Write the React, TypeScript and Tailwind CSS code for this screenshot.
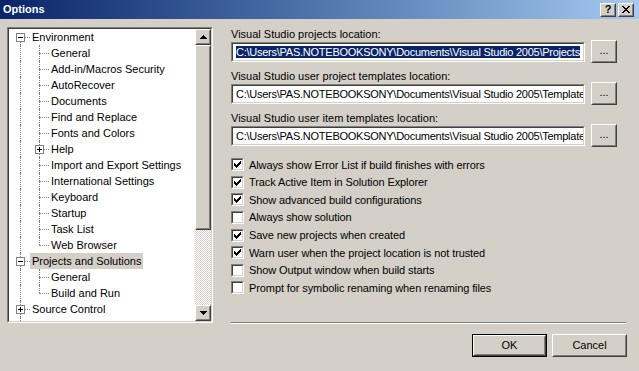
import React from 'react';

type Node = {
  label: string;
  level: 0 | 1;
  expander?: 'plus' | 'minus';
  first?: boolean;
  last?: boolean;
  selected?: boolean;
};

const tree: Node[] = [
  { label: 'Environment', level: 0, expander: 'minus', first: true },
  { label: 'General', level: 1 },
  { label: 'Add-in/Macros Security', level: 1 },
  { label: 'AutoRecover', level: 1 },
  { label: 'Documents', level: 1 },
  { label: 'Find and Replace', level: 1 },
  { label: 'Fonts and Colors', level: 1 },
  { label: 'Help', level: 1, expander: 'plus' },
  { label: 'Import and Export Settings', level: 1 },
  { label: 'International Settings', level: 1 },
  { label: 'Keyboard', level: 1 },
  { label: 'Startup', level: 1 },
  { label: 'Task List', level: 1 },
  { label: 'Web Browser', level: 1, last: true },
  { label: 'Projects and Solutions', level: 0, expander: 'minus', selected: true },
  { label: 'General', level: 1 },
  { label: 'Build and Run', level: 1, last: true },
  { label: 'Source Control', level: 0, expander: 'plus' },
  { label: 'Text Editor', level: 0, expander: 'plus' },
];

const options = [
  { label: 'Always show Error List if build finishes with errors', on: true },
  { label: 'Track Active Item in Solution Explorer', on: true },
  { label: 'Show advanced build configurations', on: true },
  { label: 'Always show solution', on: false },
  { label: 'Save new projects when created', on: true },
  { label: 'Warn user when the project location is not trusted', on: true },
  { label: 'Show Output window when build starts', on: false },
  { label: 'Prompt for symbolic renaming when renaming files', on: false },
];

const path = 'C:\\Users\\PAS.NOTEBOOKSONY\\Documents\\Visual Studio 2005\\';

function Raised({ className = '', children }: { className?: string; children?: React.ReactNode }) {
  return (
    <div className={`border border-t-white border-l-white border-r-[#404040] border-b-[#404040] bg-[#d4d0c8] ${className}`}>
      <div className="flex h-full w-full items-center justify-center border border-t-[#d4d0c8] border-l-[#d4d0c8] border-r-[#808080] border-b-[#808080]">
        {children}
      </div>
    </div>
  );
}

function Sunken({ className = '', children }: { className?: string; children?: React.ReactNode }) {
  return (
    <div className={`border border-t-[#808080] border-l-[#808080] border-r-white border-b-white ${className}`}>
      <div className="h-full w-full border border-t-[#404040] border-l-[#404040] border-r-[#d4d0c8] border-b-[#d4d0c8] bg-white">
        {children}
      </div>
    </div>
  );
}

function Expander({ kind, left }: { kind: 'plus' | 'minus'; left: string }) {
  return (
    <span className={`absolute top-[4px] h-[9px] w-[9px] border border-[#808080] bg-white ${left}`}>
      <span className="absolute left-[1px] top-[3px] h-[1px] w-[5px] bg-black" />
      {kind === 'plus' && <span className="absolute left-[3px] top-[1px] h-[5px] w-[1px] bg-black" />}
    </span>
  );
}

function TreeRow({ node }: { node: Node }) {
  return (
    <div className="flex h-[16px] shrink-0 whitespace-nowrap leading-[16px]">
      <div className="relative h-full w-[21px] shrink-0">
        <span
          className={`absolute left-[11px] bottom-0 border-l border-dotted border-[#808080] ${
            node.level === 0 && node.first ? 'top-[8px]' : 'top-0'
          }`}
        />
        {node.level === 0 && (
          <>
            <span className="absolute left-[11px] top-[8px] w-[10px] border-t border-dotted border-[#808080]" />
            {node.expander && <Expander kind={node.expander} left="left-[7px]" />}
          </>
        )}
      </div>
      {node.level === 1 && (
        <div className="relative h-full w-[19px] shrink-0">
          <span
            className={`absolute left-[9px] top-0 border-l border-dotted border-[#808080] ${
              node.last ? 'h-[8px]' : 'bottom-0'
            }`}
          />
          <span className="absolute left-[9px] top-[8px] w-[10px] border-t border-dotted border-[#808080]" />
          {node.expander && <Expander kind={node.expander} left="left-[5px]" />}
        </div>
      )}
      <span className={`px-[2px] ${node.selected ? 'bg-[#d4d0c8]' : ''}`}>{node.label}</span>
    </div>
  );
}

function Arrow({ up }: { up?: boolean }) {
  return (
    <svg width="7" height="4" viewBox="0 0 7 4" shapeRendering="crispEdges">
      <path d={up ? 'M3 0h1v1h1v1h1v1h1v1H0V3h1V2h1V1h1z' : 'M0 0h7v1H6v1H5v1H4v1H3V3H2V2H1V1H0z'} fill="#000" />
    </svg>
  );
}

function Checkbox({ on }: { on: boolean }) {
  return (
    <Sunken className="h-[13px] w-[13px] shrink-0">
      {on && (
        <svg width="9" height="9" viewBox="0 0 9 9" shapeRendering="crispEdges" className="block">
          <path
            d="M7 1h1v1h-1z M6 2h2v1h-2z M1 3h1v1h-1z M5 3h3v1h-3z M1 4h2v1h-2z M4 4h3v1h-3z M1 5h5v1h-5z M2 6h3v1h-3z M3 7h1v1h-1z"
            fill="#000"
          />
        </svg>
      )}
    </Sunken>
  );
}

function PathField({ label, value, selected }: { label: string; value: string; selected?: boolean }) {
  return (
    <div className="flex flex-col">
      <div className="h-[12px] leading-[12px] whitespace-nowrap">{label}</div>
      <div className="flex h-[23px] items-center">
        <Sunken className="h-[20px] w-[354px] shrink-0">
          <div className="h-full w-full overflow-hidden whitespace-nowrap pl-[3px] leading-[16px] tracking-[-0.25px]">
            <span className={selected ? 'bg-[#0a246a] text-white' : ''}>{value}</span>
          </div>
        </Sunken>
        <Raised className="ml-[6px] h-[23px] w-[26px] shrink-0">
          <span className="pb-[2px] leading-none">...</span>
        </Raised>
      </div>
    </div>
  );
}

export default function App() {
  return (
    <div className="h-[371px] w-[639px] overflow-hidden bg-[#d4d0c8] font-['Liberation_Sans',Arial,sans-serif] text-[11px] text-black">
      {/* caption */}
      <div className="flex h-[19px] items-center bg-gradient-to-r from-[#0a246a] to-[#a6caf0] pl-[3px] pr-[5px]">
        <span className="font-bold text-white">Options</span>
        <div className="ml-auto flex gap-[2px]">
          <Raised className="h-[14px] w-[16px]">
            <span className="text-[11px] font-bold leading-none">?</span>
          </Raised>
          <Raised className="h-[14px] w-[16px]">
            <svg width="8" height="7" viewBox="0 0 8 7" shapeRendering="crispEdges">
              <path
                d="M0 0h2v1h1v1h2V1h1V0h2v1H7v1H6v1H5v1h1v1h1v1h1v1H6V6H5V5H3v1H2v1H0V6h1V5h1V4h1V3H2V2H1V1H0z"
                fill="#000"
              />
            </svg>
          </Raised>
        </div>
      </div>

      <div className="flex pl-[7px] pt-[8px]">
        {/* tree */}
        <Sunken className="h-[296px] w-[206px] shrink-0">
          <div className="flex h-full">
            <div className="flex flex-1 flex-col overflow-hidden">
              {tree.map((n, i) => (
                <TreeRow key={i} node={n} />
              ))}
            </div>
            <div className="flex w-[16px] flex-col">
              <Raised className="h-[16px] w-[16px]">
                <Arrow up />
              </Raised>
              <Raised className="h-[185px] w-[16px]" />
              <div className="flex-1 bg-[repeating-conic-gradient(#d4d0c8_0_25%,#ffffff_0_50%)] bg-[length:2px_2px]" />
              <Raised className="h-[16px] w-[16px]">
                <Arrow />
              </Raised>
            </div>
          </div>
        </Sunken>

        {/* settings */}
        <div className="ml-[18px] flex w-[396px] flex-col pt-[1px]">
          <PathField label="Visual Studio projects location:" value={path + 'Projects'} selected />
          <div className="mt-[7px]">
            <PathField label="Visual Studio user project templates location:" value={path + 'Templates'} />
          </div>
          <div className="mt-[7px]">
            <PathField label="Visual Studio user item templates location:" value={path + 'Templates'} />
          </div>

          <div className="mt-[9px] flex flex-col">
            {options.map((o) => (
              <div key={o.label} className="flex h-[17.6px] items-center whitespace-nowrap">
                <Checkbox on={o.on} />
                <span className="ml-[5px] tracking-[-0.1px]">{o.label}</span>
              </div>
            ))}
          </div>

          <div className="mt-[25px] h-[2px] w-[395px] border-t border-t-[#808080] border-b border-b-white" />

          <div className="mt-[10px] flex justify-end gap-[5px]">
            <div className="h-[23px] w-[75px] border border-black">
              <Raised className="h-full w-full">OK</Raised>
            </div>
            <Raised className="h-[23px] w-[75px]">Cancel</Raised>
          </div>
        </div>
      </div>
    </div>
  );
}
